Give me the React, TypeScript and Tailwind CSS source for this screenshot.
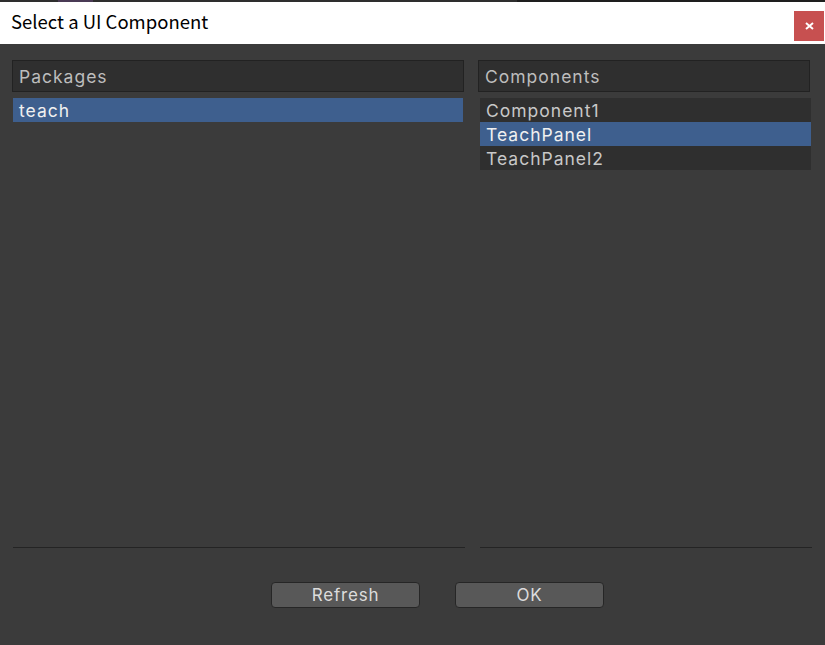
import React from 'react';

const packages = ['teach'];
const components = ['Component1', 'TeachPanel', 'TeachPanel2'];

const ListRow = ({ label, selected }: { label: string; selected: boolean }) => (
    <div
        className={`h-6 flex items-center pl-[6px] pt-[3px] text-[17.5px] tracking-[1px] ${
            selected ? 'bg-[#3e5f8e] text-[#f0f0f0]' : 'text-[#c8c8c8]'
        }`}
    >
        {label}
    </div>
);

const Column = ({
    title,
    items,
    selected,
    listBg
}: {
    title: string;
    items: string[];
    selected: number;
    listBg: boolean;
}) => (
    <div className="flex flex-col flex-1 min-w-0">
        <div className="h-[32px] border border-[#222222] bg-[#2f2f2f] flex items-center pl-[6px] pt-[2px] text-[17.5px] tracking-[1px] text-[#bdbdbd]">
            {title}
        </div>
        <div
            className={`mt-[6px] ${listBg ? 'bg-[#2f2f2f] ml-[2px] -mr-[1px]' : 'mx-[1px]'}`}
        >
            {items.map((it, idx) => (
                <ListRow key={it} label={it} selected={idx === selected} />
            ))}
        </div>
        <div className="flex-1" />
        <div className={`h-[1px] bg-[#242424] mb-[34px] ${listBg ? 'ml-[2px] -mr-[2px]' : 'ml-[1px] -mr-[1px]'}`} />
    </div>
);

export default function App() {
    return (
        <div
            className="w-[825px] h-[645px] flex flex-col bg-[#3b3b3b] overflow-hidden"
            style={{ fontFamily: 'Inter, "Noto Sans", sans-serif' }}
        >
            <div className="h-[2px] flex bg-[#2e2e2e]">
                <div className="w-[58px]" />
                <div className="w-[35px] bg-[#4a3a55]" />
                <div className="flex-1" />
                <div className="w-[308px] bg-[#1e1e1e]" />
            </div>
            <div className="h-[42px] bg-white flex items-center justify-between">
                <span
                    className="pl-[11px] text-[18.5px] text-black -mt-[3px]"
                    style={{ fontFamily: '"Noto Sans CJK SC", "Noto Sans", sans-serif' }}
                >
                    Select a UI Component
                </span>
                <div className="w-[30px] h-[30px] mr-[1px] mt-[6px] bg-[#c75050] flex items-center justify-center">
                    <svg width="9" height="8" viewBox="0 0 9 8">
                        <path d="M1 1 L8 7 M8 1 L1 7" stroke="white" strokeWidth="2" />
                    </svg>
                </div>
            </div>
            <div className="flex-1 flex flex-col px-[12px] pt-[16px]">
                <div className="flex-1 flex gap-[14px] pr-[3px]">
                    <div className="w-[452px] flex">
                        <Column title="Packages" items={packages} selected={0} listBg={false} />
                    </div>
                    <Column title="Components" items={components} selected={1} listBg={true} />
                </div>
                <div className="flex justify-center gap-[35px] pl-[50px] pb-[37px]">
                    <button className="w-[149px] h-[26px] rounded-[4px] border border-[#262626] bg-[#585858] text-[#dcdcdc] text-[17px] tracking-[0.8px] pt-[1px] flex items-center justify-center">
                        Refresh
                    </button>
                    <button className="w-[149px] h-[26px] rounded-[4px] border border-[#262626] bg-[#585858] text-[#dcdcdc] text-[17px] tracking-[0.8px] pt-[1px] flex items-center justify-center">
                        OK
                    </button>
                </div>
            </div>
        </div>
    );
}
